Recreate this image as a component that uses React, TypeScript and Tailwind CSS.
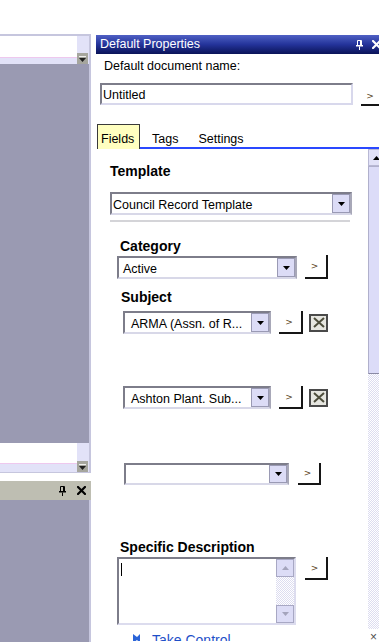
import React from "react";

function Tri({ dir = "down", color = "#000000" }: { dir?: "down" | "up"; color?: string }) {
  return (
    <svg width="7" height="4" viewBox="0 0 7 4">
      {dir === "down" ? <path d="M0 0h7L3.5 4z" fill={color} /> : <path d="M0 4h7L3.5 0z" fill={color} />}
    </svg>
  );
}

function Pin({ color }: { color: string }) {
  return (
    <svg width="7" height="10" viewBox="0 0 7 10">
      <path d="M1.5 0.5h4v5h-4z" fill="none" stroke={color} strokeWidth="1" />
      <path d="M4 1h1v4H4z" fill={color} />
      <path d="M0 5h7v1.5H0z" fill={color} />
      <path d="M3 6.5h1V10H3z" fill={color} />
    </svg>
  );
}

function XIcon({ color }: { color: string }) {
  return (
    <svg width="9" height="9" viewBox="0 0 9 9">
      <path d="M1 1L8 8M8 1L1 8" stroke={color} strokeWidth="2.2" strokeLinecap="square" />
    </svg>
  );
}

function Combo({ cls, text, textCls }: { cls: string; text: string; textCls: string }) {
  return (
    <div
      className={`shrink-0 flex bg-white border-2 border-t-[#7d7d8a] border-l-[#7d7d8a] border-r-[#a8a8b8] border-b-[#d8d8e8] ${cls}`}
    >
      <div className={`flex-1 flex items-center text-[12.5px] leading-[15px] whitespace-nowrap overflow-hidden pt-[4px] ${textCls}`}>
        {text}
      </div>
      <div className="w-[18px] flex items-center justify-center bg-[#dcdcf6] border border-[#9a9ab4]">
        <Tri />
      </div>
    </div>
  );
}

function GoBtn({ cls }: { cls: string }) {
  return (
    <div
      className={`shrink-0 flex items-center justify-center bg-white border-r-2 border-b-2 border-[#161616] text-[9px] leading-none text-[#5a4424] ${cls}`}
    >
      <span className="font-['DejaVu_Sans',sans-serif] -ml-[2px] pt-[1px]">&gt;</span>
    </div>
  );
}

function XBox() {
  return (
    <div className="shrink-0 w-[19px] h-[18px] border-2 border-[#4a4a4a] bg-[#e6e6e0] flex items-center justify-center ml-[6px]">
      <svg width="12" height="11" viewBox="0 0 12 11">
        <path d="M1 1L11 10M11 1L1 10" stroke="#4e4e3c" strokeWidth="2" />
      </svg>
    </div>
  );
}

function Dotted({ cls }: { cls: string }) {
  return (
    <div
      className={`bg-[image:repeating-conic-gradient(#dcdcf0_0%_25%,#ffffff_0%_50%)] bg-[length:2px_2px] ${cls}`}
    />
  );
}

function SmallBtn() {
  return (
    <div className="w-[11px] h-[11px] bg-[#a6a69e] flex items-center justify-center">
      <svg width="7" height="6" viewBox="0 0 7 6">
        <path d="M0 0h7v1H0z" fill="#f0f0f0" />
        <path d="M0 2h7L3.5 6z" fill="#202020" />
      </svg>
    </div>
  );
}

function Strip({ whiteH, bandH }: { whiteH: string; bandH: string }) {
  return (
    <div className="flex shrink-0">
      <div className="flex-1 flex flex-col">
        <div className={`bg-white ${whiteH}`} />
        <div className="h-[1px] bg-[#eec8ee]" />
        <div className={`bg-[#e2e2f8] ${bandH}`} />
      </div>
      <div className="w-[12px] bg-[#e2e2f8] flex flex-col justify-end">
        <SmallBtn />
      </div>
    </div>
  );
}

export default function App() {
  return (
    <div className="w-[379px] h-[642px] overflow-hidden bg-white flex font-['Liberation_Sans',Arial,sans-serif] text-black">
      {/* left column */}
      <div className="w-[91px] shrink-0 flex flex-col pt-[34px]">
        <div className="h-[439px] shrink-0 flex flex-col border-t-2 border-r-2 border-b border-[#c6c6de]">
          <Strip whiteH="h-[21px]" bandH="h-[6px]" />
          <div className="flex-1 bg-[#9a9ab2]" />
          <Strip whiteH="h-[20px]" bandH="h-[8px]" />
        </div>
        <div className="h-[8px] shrink-0" />
        <div className="flex-1 flex flex-col">
          <div className="h-[19px] shrink-0 bg-[#bebeb2] flex items-center justify-end gap-[11px] pr-[5px]">
            <Pin color="#000000" />
            <XIcon color="#000000" />
          </div>
          <div className="flex-1 bg-[#9a9ab2] border-r-2 border-[#c6c6de]" />
        </div>
      </div>

      {/* right panel */}
      <div className="ml-[5px] w-[289px] shrink-0 flex flex-col pt-[35px] [&>*]:shrink-0">
        <div className="h-[19px] flex items-center bg-linear-to-b from-[#5060c4] via-[#24339a] to-[#0a1358] text-white">
          <span className="pl-[4px] text-[12.5px] leading-[15px] flex-1">Default Properties</span>
          <Pin color="#ffffff" />
          <div className="ml-[9px] mr-[4px]">
            <XIcon color="#ffffff" />
          </div>
        </div>
        <div className="mt-[5px] pl-[8px] h-[15px] text-[12.5px] leading-[15px]">Default document name:</div>
        <div className="mt-[9px] pl-[4px] flex items-start h-[23px]">
          <div className="w-[253px] h-[22px] bg-white border-2 border-t-[#7d7d8a] border-l-[#7d7d8a] border-r-[#d8d8ec] border-b-[#d8d8ec] flex items-center pl-[1px] pt-[2px] text-[12.5px] leading-[15px]">
            Untitled
          </div>
          <GoBtn cls="ml-[8px] mt-[5px] w-[22px] h-[18px]" />
        </div>

        {/* tabs */}
        <div className="mt-[18px] h-[25px] flex items-end">
          <div className="w-[1px]" />
          <div className="w-[43px] h-[25px] bg-[#ffffc0] border-t border-l border-r border-[#3a3a3a] pl-[3px] pt-[7px] text-[12.5px] leading-[15px]">
            Fields
          </div>
          <div className="flex-1 h-[25px] border-b-2 border-[#2a48ff] flex items-start pt-[8px] text-[12.5px] leading-[15px]">
            <span className="ml-[12px]">Tags</span>
            <span className="ml-[20px]">Settings</span>
          </div>
        </div>

        {/* content */}
        <div className="h-[492px] flex overflow-hidden">
          <div className="w-[272px] flex flex-col [&>*]:shrink-0">
            <div className="mt-[14px] pl-[14px] h-[16px] text-[14px] leading-[16px] font-bold">Template</div>
            <Combo cls="mt-[13px] ml-[14px] w-[242px] h-[23px]" text="Council Record Template" textCls="pl-[1px]" />
            <div className="mt-[5px] ml-[14px] w-[240px] h-[2px] bg-[#d4d4d8]" />

            <div className="mt-[16px] pl-[24px] h-[16px] text-[14px] leading-[16px] font-bold">Category</div>
            <div className="mt-[2px] ml-[21px] flex items-start">
              <Combo cls="w-[180px] h-[23px]" text="Active" textCls="pl-[4px]" />
              <GoBtn cls="ml-[8px] -mt-[1px] w-[23px] h-[24px]" />
            </div>

            <div className="mt-[10px] pl-[25px] h-[16px] text-[14px] leading-[16px] font-bold">Subject</div>
            <div className="mt-[6px] ml-[27px] flex items-center h-[23px]">
              <Combo cls="w-[148px] h-[23px]" text="ARMA (Assn. of R..." textCls="pl-[6px]" />
              <GoBtn cls="ml-[8px] w-[24px] h-[23px]" />
              <XBox />
            </div>
            <div className="mt-[52px] ml-[27px] flex items-center h-[23px]">
              <Combo cls="w-[148px] h-[23px]" text="Ashton Plant. Sub..." textCls="pl-[6px]" />
              <GoBtn cls="ml-[8px] w-[24px] h-[23px]" />
              <XBox />
            </div>
            <div className="mt-[54px] ml-[28px] flex items-center h-[22px]">
              <Combo cls="w-[165px] h-[22px]" text="" textCls="pl-[4px]" />
              <GoBtn cls="ml-[9px] w-[23px] h-[22px]" />
            </div>

            <div className="mt-[54px] pl-[24px] h-[16px] text-[14px] leading-[16px] font-bold">Specific Description</div>
            <div className="mt-[2px] ml-[21px] flex items-start">
              <div className="shrink-0 w-[179px] h-[68px] flex bg-white border-2 border-t-[#7d7d8a] border-l-[#7d7d8a] border-r-[#dcdcee] border-b-[#dcdcee]">
                <div className="flex-1 pl-[2px] pt-[4px]">
                  <div className="w-[1px] h-[13px] bg-black" />
                </div>
                <div className="w-[18px] flex flex-col">
                  <div className="h-[18px] bg-[#dcdcf6] border border-[#a8a8c4] flex items-center justify-center">
                    <Tri dir="up" color="#a4a4bc" />
                  </div>
                  <Dotted cls="flex-1" />
                  <div className="h-[18px] bg-[#dcdcf6] border border-[#a8a8c4] flex items-center justify-center">
                    <Tri color="#a4a4bc" />
                  </div>
                </div>
              </div>
              <GoBtn cls="ml-[9px] w-[23px] h-[23px]" />
            </div>

            <div className="mt-[7px] pl-[37px] flex items-start">
              <svg width="10" height="12" viewBox="0 0 10 12" className="mt-[2px]">
                <path d="M0 0l4 3 3-3v9L4 6 0 9z" fill="#2a64d8" />
              </svg>
              <span className="ml-[9px] text-[14px] leading-[16px] text-[#1e4fc8]">Take Control</span>
            </div>
          </div>

          {/* scrollbar */}
          <div className="w-[17px] flex flex-col [&>*]:shrink-0">
            <div className="h-[17px] bg-[#e2e2f8] border border-[#b8b8d4] flex items-center justify-center">
              <Tri dir="up" />
            </div>
            <div className="h-[208px] bg-[#dcdcf8] border border-[#b0b0cc] border-b-[#8a8aa4]" />
            <Dotted cls="h-[255px]" />
            <div className="mt-[2px] pl-[2px] text-[12px] leading-[12px] text-[#505050]">×</div>
          </div>
        </div>
      </div>
    </div>
  );
}
